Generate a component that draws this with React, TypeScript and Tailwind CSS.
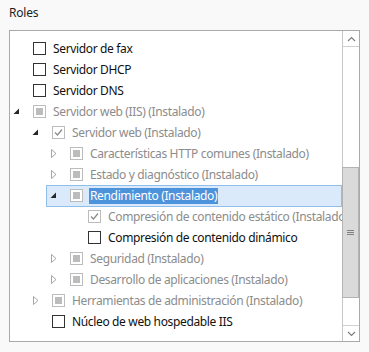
import React from "react";

type Row = {
  level: number;
  expander?: "open" | "closed";
  box: "empty" | "ind" | "check" | "checkDis";
  text: string;
  disabled?: boolean;
  selected?: boolean;
};

const rows: Row[] = [
  { level: 0, box: "empty", text: "Servidor de fax" },
  { level: 0, box: "empty", text: "Servidor DHCP" },
  { level: 0, box: "empty", text: "Servidor DNS" },
  { level: 0, expander: "open", box: "ind", text: "Servidor web (IIS) (Instalado)", disabled: true },
  { level: 1, expander: "open", box: "checkDis", text: "Servidor web (Instalado)", disabled: true },
  { level: 2, expander: "closed", box: "ind", text: "Características HTTP comunes (Instalado)", disabled: true },
  { level: 2, expander: "closed", box: "ind", text: "Estado y diagnóstico (Instalado)", disabled: true },
  { level: 2, expander: "open", box: "ind", text: "Rendimiento (Instalado)", disabled: true, selected: true },
  { level: 3, box: "checkDis", text: "Compresión de contenido estático (Instalado)", disabled: true },
  { level: 3, box: "empty", text: "Compresión de contenido dinámico" },
  { level: 2, expander: "closed", box: "ind", text: "Seguridad (Instalado)", disabled: true },
  { level: 2, expander: "closed", box: "ind", text: "Desarrollo de aplicaciones (Instalado)", disabled: true },
  { level: 1, expander: "closed", box: "ind", text: "Herramientas de administración (Instalado)", disabled: true },
  { level: 1, box: "empty", text: "Núcleo de web hospedable IIS" },
];

const indentClass = ["pl-[3px]", "pl-[22px]", "pl-[40px]", "pl-[58px]"];

function Expander({ kind }: { kind?: "open" | "closed" }) {
  if (!kind) return <span className="w-[20px] shrink-0" />;
  if (kind === "open")
    return (
      <span className="w-[20px] shrink-0 flex items-center justify-start">
        <svg width="7" height="7" viewBox="0 0 7 7">
          <path d="M6 0.5 L6 6 L0.5 6 Z" fill="#262626" />
        </svg>
      </span>
    );
  return (
    <span className="w-[20px] shrink-0 flex items-center justify-start pl-[1px]">
      <svg width="6" height="9" viewBox="0 0 6 9">
        <path d="M0.5 0.5 L5 4.5 L0.5 8.5 Z" fill="none" stroke="#a6a6a6" strokeWidth="1" />
      </svg>
    </span>
  );
}

function Box({ kind }: { kind: Row["box"] }) {
  const dis = kind !== "empty";
  return (
    <span
      className={
        "w-[13px] h-[13px] shrink-0 border flex items-center justify-center bg-white " +
        (dis ? "border-[#bcbcbc]" : "border-[#333333]")
      }
    >
      {kind === "ind" && <span className="w-[7px] h-[7px] bg-[#bcbcbc]" />}
      {kind === "checkDis" && (
        <svg width="11" height="11" viewBox="0 0 11 11">
          <path d="M2 5.5 L4.5 8 L9 2.5" fill="none" stroke="#8a8a8a" strokeWidth="1.2" />
        </svg>
      )}
    </span>
  );
}

export default function App() {
  return (
    <div
      className="w-[369px] h-[352px] bg-[#f9f9f9] relative overflow-hidden"
      style={{ fontFamily: '"Noto Sans", "Open Sans", sans-serif' }}
    >
      <div className="pl-[9px] pt-[4px] h-[30px] text-[12px] text-[#1e1e1e] tracking-[-0.2px]">Roles</div>
      <div className="ml-[9px] w-[351px] h-[312px] border border-[#a9a9a9] bg-white flex">
        <div className="flex-1 min-w-0 overflow-hidden pt-[7px]">
          {rows.map((r, i) => (
            <div key={i} className={"h-[21px] flex items-center " + indentClass[r.level]}>
              <div
                className={
                  "flex items-center h-[22px] flex-1 min-w-0 " +
                  (r.selected ? "bg-[#dbeafb] border border-[#90bde9] -ml-[4px] pl-[3px]" : "")
                }
              >
                <Expander kind={r.expander} />
                <Box kind={r.box} />
                <span
                  className={
                    "ml-[6px] text-[12px] tracking-[-0.35px] whitespace-nowrap leading-[16px] px-[1px] " +
                    (r.selected
                      ? "bg-[#4d93db] text-white"
                      : r.disabled
                      ? "text-[#8c8c8c]"
                      : "text-[#111111]")
                  }
                >
                  {r.text}
                </span>
              </div>
            </div>
          ))}
        </div>
        <div className="w-[17px] shrink-0 border-l border-[#c6c6c6] flex flex-col bg-white">
          <div className="h-[16px] border-b border-[#d0d0d0] flex items-center justify-center">
            <svg width="9" height="6" viewBox="0 0 9 6">
              <path d="M1 5 L4.5 1.5 L8 5" fill="none" stroke="#7a7a7a" strokeWidth="1.1" />
            </svg>
          </div>
          <div className="h-[120px]" />
          <div className="h-[131px] bg-[#dadada] border border-[#b3b3b3] -ml-[1px] flex items-center justify-center">
            <svg width="7" height="6" viewBox="0 0 7 6">
              <path d="M0 0.5 H7 M0 2.5 H7 M0 4.5 H7" stroke="#808080" strokeWidth="1" />
            </svg>
          </div>
          <div className="flex-1" />
          <div className="h-[16px] border-t border-[#d0d0d0] flex items-center justify-center">
            <svg width="9" height="6" viewBox="0 0 9 6">
              <path d="M1 1 L4.5 4.5 L8 1" fill="none" stroke="#7a7a7a" strokeWidth="1.1" />
            </svg>
          </div>
        </div>
      </div>
    </div>
  );
}
